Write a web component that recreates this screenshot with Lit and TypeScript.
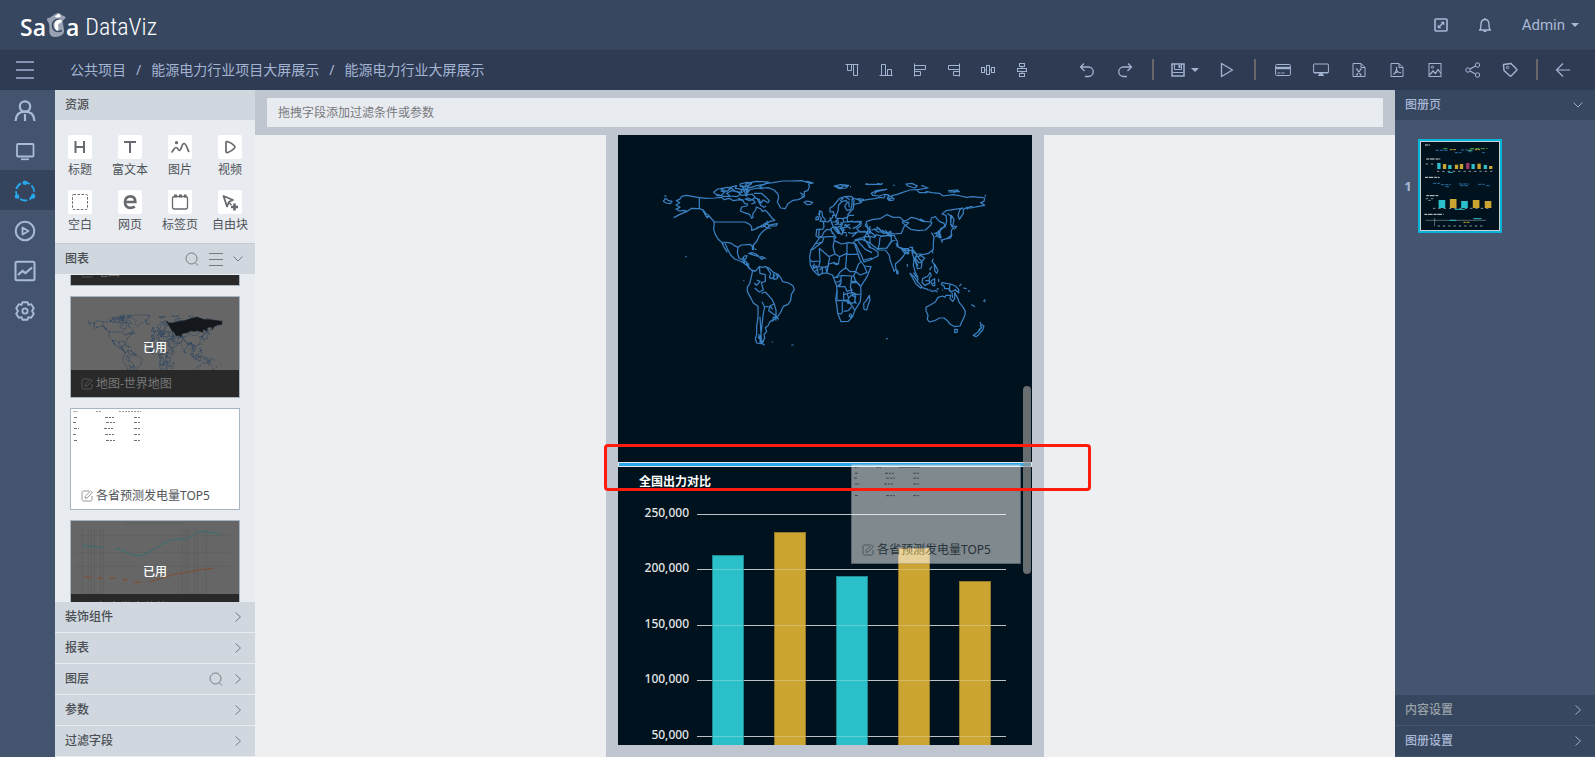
import { LitElement, html, svg, css } from "lit";
import { customElement } from "lit/decorators.js";
import { classMap } from "lit/directives/class-map.js";

/* ---------- icons ---------- */

type Glyph = { box: number; body: unknown };

const glyphs: Record<string, Glyph> = {
  // top bar
  expand: { box: 14, body: svg`<rect x="1" y="1" width="12" height="12" rx="1" stroke-width="1.600"/><path d="M4.500 9.500l5-5" stroke-width="1.500"/><path d="M6.500 3.700h3.800v3.800zM3.700 6.500v3.800h3.800z" fill="currentColor" stroke="none"/>` },
  bell: { box: 16, body: svg`<path d="M2 13h12M3 13c1-1.500 1-3 1-5.500C4 4.500 5.500 2.500 8 2.500s4 2 4 5c0 2.500 0 4 1 5.500" stroke-width="1.4"/><path d="M8 2.500V1.200M6.500 14.300h3" stroke-width="1.5"/>` },
  menu: { box: 18, body: svg`<path d="M0 1h18M0 9h18M0 17h18" stroke-width="1.5"/>` },
  // alignment tools
  alignTop: { box: 14, body: svg`<path d="M0.500 1.500h13M2.500 1.500v6h4v-6M8.500 1.500v11h4v-11"/>` },
  alignBottom: { box: 14, body: svg`<path d="M0.500 12.500h13M2.500 12.500v-11h4v11M8.500 12.500v-6h4v6"/>` },
  alignLeft: { box: 14, body: svg`<path d="M1.500 0.500v13M1.500 2.500h11v4h-11M1.500 8.500h6v4h-6"/>` },
  alignRight: { box: 14, body: svg`<path d="M12.500 0.500v13M12.500 2.500h-11v4h11M12.500 8.500h-6v4h6"/>` },
  spreadH: { box: 14, body: svg`<rect x="5.500" y="2.500" width="3" height="9"/><rect x="0.500" y="4.500" width="3" height="5"/><rect x="10.500" y="4.500" width="3" height="5"/><path d="M3.500 7h2M8.500 7h2"/>` },
  spreadV: { box: 14, body: svg`<rect x="2.500" y="5.500" width="9" height="3"/><rect x="4.500" y="0.500" width="5" height="3"/><rect x="4.500" y="10.500" width="5" height="3"/><path d="M7 3.500v2M7 8.500v2"/>` },
  // main tools
  undo: { box: 16, body: svg`<path d="M5 1.500L1.500 5l4 4M1.500 5h8a4.600 4.600 0 0 1 0 9.500H6" stroke-width="1.3"/>` },
  redo: { box: 16, body: svg`<path d="M11 1.500L14.500 5l-4 4M14.500 5h-8a4.600 4.600 0 0 0 0 9.500H10" stroke-width="1.3"/>` },
  save: { box: 14, body: svg`<path d="M1 1h12v12H1z" stroke-width="1.5"/><path d="M3.500 1.500v5h7v-5M2 9.500h10"/><path d="M7.500 2h2v3h-2z" fill="currentColor" stroke="none"/>` },
  play: { box: 16, body: svg`<path d="M2.500 1.500v13L13.500 8z" stroke-width="1.300" stroke-linejoin="round"/>` },
  card: { box: 16, body: svg`<rect x="0.600" y="2.500" width="14.800" height="11" rx="1"/><path d="M1 6h14" stroke-width="2.400"/><path d="M2.500 11h7" stroke-dasharray="3 1"/>` },
  screen: { box: 16, body: svg`<rect x="0.600" y="2" width="14.800" height="9" rx="0.500"/><path d="M1 10.500h14"/><path d="M6.500 11.500h3v2h-3z" fill="currentColor"/><path d="M5 13.500h6"/>` },
  excel: { box: 16, body: svg`<path d="M2 1.500h8l4 4v9H2zM10 1.500v4h4"/><path d="M5.500 7l4.500 6M10 7l-4.500 6M4.800 7h2M8.800 7h2M4.800 13h2M8.800 13h2" stroke-width="1.200"/>` },
  pdf: { box: 16, body: svg`<path d="M2 1.500h8l4 4v9H2zM10 1.500v4h4"/><path d="M7.500 5c.5 3 0 5-3 7.500M7.500 8c1 2 2 3 4.500 2.500M5.500 11l4-1.200" stroke-width="1.200"/>` },
  image: { box: 16, body: svg`<rect x="2" y="1.500" width="12" height="13"/><path d="M2.500 13l3.500-4 2.500 2.500 2.500-4 3 4" stroke-width="1.200"/><circle cx="5.500" cy="5.200" r="1.100"/>` },
  share: { box: 16, body: svg`<circle cx="3" cy="8" r="2.200"/><circle cx="12.500" cy="3" r="2.200"/><circle cx="12.500" cy="13" r="2.200"/><path d="M5 7l5.500-3M5 9l5.500 3" stroke-width="1.200"/>` },
  tag: { box: 16, body: svg`<path d="M1.500 2.500l7.500-1 5.500 5.500c.6.600.6 1 0 1.600L9.300 13.800c-.6.600-1 .6-1.600 0L2 8.500z" stroke-width="1.400" stroke-linejoin="round"/><circle cx="5.500" cy="5.500" r="1.200"/>` },
  back: { box: 16, body: svg`<path d="M1.500 8h13.500M8 1.500L1.500 8 8 14.500" stroke-width="1.200"/>` },
  // left rail
  user: { box: 22, body: svg`<circle cx="11" cy="6.500" r="5.200" stroke-width="2.200"/><path d="M1.500 21c.3-6 4-9.300 9.500-9.300s9.200 3.300 9.500 9.300M11 14v7" stroke-width="2.200"/>` },
  monitor: { box: 22, body: svg`<rect x="3" y="4" width="16.500" height="12.500" rx="1" stroke-width="1.800"/><path d="M7 19.300h8" stroke-width="1.700"/>` },
  ring: { box: 22, body: svg`<circle cx="11" cy="11.500" r="9" stroke-width="1.800" stroke-dasharray="7.500 2.200 7.500 1.650" stroke-dashoffset="-2"/><g fill="currentColor" stroke="none"><circle cx="11" cy="2.700" r="2.300"/><circle cx="3" cy="16.500" r="2.300"/><circle cx="19" cy="16.500" r="2.300"/></g>` },
  playCircle: { box: 22, body: svg`<circle cx="11" cy="11" r="9.300" stroke-width="2"/><path d="M8.500 7.500v7l6-3.500z" stroke-width="1.800" stroke-linejoin="round"/>` },
  trend: { box: 22, body: svg`<rect x="1.500" y="1.800" width="19" height="18.500" rx="1.500" stroke-width="2"/><path d="M4 15l4.500-4 3 2.200L18 7.500" stroke-width="2.200"/>` },
  gear: { box: 22, body: svg`<path d="M8.500 2.200h5l.9 2.700 2.800-.7 2.600 4-1.800 2.800 1.800 2.800-2.600 4-2.800-.7-.9 2.700h-5l-.9-2.700-2.800.7-2.600-4L4 11 2.200 8.200l2.600-4 2.800.7z" stroke-width="1.900" stroke-linejoin="round"/><circle cx="11" cy="11" r="2.600" stroke-width="1.800"/>` },
  // resource tiles
  heading: { box: 24, body: svg`<path d="M7.500 6v12M16 6v12M7.500 12H16" stroke-width="2"/>` },
  richText: { box: 24, body: svg`<path d="M6 7h12M12 7v11" stroke-width="2"/>` },
  picture: { box: 24, body: svg`<path d="M3.500 17.500c2-2 2.500-5 4.500-5s2 3 3.500 3c2 0 2-7 4.500-7 2.300 0 3 5 5 8.500" stroke-width="1.700"/><circle cx="8.500" cy="7.700" r="1.600" fill="currentColor" stroke="none"/>` },
  video: { box: 24, body: svg`<path d="M8 7.500c0-1 1-1 2-.7 3 1 5 2.500 6.500 4.200.6.700.6 1.200 0 2-1.500 1.700-3.500 3.500-6.500 4.500-1 .3-2 .1-2-.8z" stroke-width="1.700"/>` },
  blank: { box: 24, body: svg`<rect x="4.500" y="4.500" width="15" height="15" rx="1" stroke-dasharray="2.500 1.500"/>` },
  web: { box: 24, body: svg`<path d="M8 12h9.300c0-3.700-2-5.700-5-5.700-3.200 0-5.300 2.400-5.300 6 0 3.500 2.200 5.500 5.300 5.500 1.700 0 3.200-.4 4.500-1.200" stroke-width="2.700"/>` },
  tabs: { box: 24, body: svg`<rect x="4.500" y="6.500" width="15" height="12.500" rx="2" stroke-width="1.300"/><path d="M6 6h3M11 6h3M16 6h2.500" stroke-width="2.800"/>` },
  freeBlock: { box: 24, body: svg`<path d="M5.500 6l9.500 4-4 1.800-2 4.700z" stroke-width="1.800" stroke-linejoin="round"/><path d="M11 12.500l2.500 2.500" stroke-width="1.500"/><path d="M16.500 13.500v7M13 17h7" stroke-width="2.600"/>` },
  // section headers
  search: { box: 14, body: svg`<circle cx="6.500" cy="6.500" r="5.500"/><path d="M10.500 11l2.500 2.500"/>` },
  list: { box: 14, body: svg`<path d="M0 1.500h14M0 7.500h14M0 13.500h14"/>` },
  down: { box: 10, body: svg`<path d="M0.500 2.500l4.500 4.500 4.500-4.500"/>` },
  right: { box: 10, body: svg`<path d="M2.500 0.500l5 4.500-5 4.500"/>` },
  edit: { box: 12, body: svg`<path d="M8 1H2.500C1.500 1 1 1.500 1 2.500v7c0 1 .5 1.500 1.500 1.500h7c1 0 1.500-.5 1.500-1.500V6M4 8.200l.3-2L9.500 1l1.800 1.600L6 8z"/>` },
};

function icon(name: string, size: number) {
  const g = glyphs[name];
  return html`<svg class="ic" width=${size} height=${size} viewBox="0 0 ${g.box} ${g.box}" aria-hidden="true">${g.body}</svg>`;
}

/* ---------- world map outline ---------- */

const americas = [
  // Alaska and the Aleutians
  "M190 214l6-9 8 6 12 3-5 7-13-2zM192 198h8M245 199l15-3 38 7v33l-23-1-13 9-10 4-12 5-19 10M262 244l-10-3-14 2-10-6 12-5-12-7 11-7-10-6 10-4 6-9M240 207l-11 6",
  // Canada
  "M298 203l20 2 25-1 22-2 8 7 15-4 12 7 20-3 10 4 3 7 10 2-3 6-15 3-4 12 12 5 16 5 6 12 4-3-1-10 9-12 2-9 14 6 4 7 10-3 12 14 8 10 7 6-14 3-10 8 10 6 18 0 4-7-13 2-14 3",
  "M298 236l12 4 9 12 6 3 10 12 8 9M312 243l6 15 5 5 3-7M308 240l13 24M343 276h92l14 7 6 8 0 10 17-6 12-8 14-8 6-6M470 292l20-2 12-10M488 284l10 8 14 3",
  // United States coast
  "M343 276l-2 22 5 15 8 14 10 9M414 352l10-7 26-2 7 6 0 9 4 1-1-14 11-12 4-10 7-12 8-8 13-9 5-8M365 336l20 2 9 2 9 7 11 5",
  // Mexico and Central America
  "M365 336l5 12 9 13 3 6M368 336l2 12 12 19M375 340l8 18 9 17 12 12 16 6 10 5 13 10 8 10 9 7M414 352l-2 16 5 16 9 5 7-11 8-1-3 9-9 6 8 2 7 8 1 12 7 2M430 380l4 22 14 0M440 403l8 7",
  // Caribbean
  "M446 370l10-2 12 4 8 7-12-3-16-5zM478 382l8-2 8 4-9 4zM465 356l4 3M496 385h3M256 380h4M430 452h3M515 636h4M574 645h7",
  // Arctic islands
  "M341 187l12-10 15-2-5 8 11 3-10 10-12 1zM365 176l18-4 8 4-10 8-9-2zM380 190l14-8 18 3 10 8-12 7-20-2zM390 172l20-5-4 8 16 2 4 10-18-2zM412 176l26 4 4 14-20 2M420 162l20-5 15 4-16 8-18 0zM440 160l28-6 38 2-12 7-24 4-18 6-17-4zM430 172l18 10-12 14 20-4 10 10-10 8-12-6-10 4M446 180l26-6 18 3M462 190l22 0 14 12 10 10-4 6-14-8-8 10-4-12-14-4M436 206l12 6 10-4 8 10-12 4M425 165l12 28M445 164l-6 36M452 170l-24 14M470 204l12 22 10 6 6-4M415 205l16 6M350 193l20 6 20 0",
  // Greenland and Iceland
  "M478 170l10 4 16-1 18 7 12 12 2 10-4 14 10 18 14 2 7-14 16-11 16-2 18-9 0-15 10-3 5-12-2-8 14-3-18-2-16-5-34 1-24 0-30 5-22 3z M600 188l14 8M604 196l8 6M620 153l20 6",
  "M612 217l8-4 10 2 8 2-6 6-10 1z",
  // South America
  "M458 420l8 4 12-14 8 2 10-2 12 5 12 12 14 6 8 10 6 12 18 4 13 8 4 12-9 14-2 18-8 12-14 6-8 18-10 14-10 8-12 6-6 12-8 6 4 12-8 8 2 12-6 10-6-2 6 7-6 1-12-2-4-12 4-14 0-26 4-24 0-34-14-10-8-16-10-18 0-14 7-10 6-24z",
  "M478 410l2 20 16 4 0 20-12 4 6 22-12 6-14-12M462 460l8 6 10-12-10-4M500 412l12 18-4 12 8 4 10-12M520 430l2 18 10-2 4-12M530 432l2 12M484 490l12-4 20 22 6 14-12 6-4 14 20 14 2 16M522 520l6 20 0 18 8 10M486 515l8 16-4 20-4 34-4 34 2 14 8 2M494 531l12-2M510 528l8 10M518 575l2-14 14 4M480 560l4 70M474 620l14 20M476 612l8 26 10 8M478 634l14 10",
];

const africa = [
  "M105 232L90 252 78 270 74 290 76 315 85 332 100 346 112 340 125 339 143 345 148 360 155 378 156 392 152 418 156 440 158 460 168 485 190 484 203 470 210 450 226 424 228 400 227 380 246 350 258 320 238 318 225 300 216 272 208 250 190 248 170 252 148 242 147 230 130 230z",
  "M90 252l22-6 4-12M112 246l-28 22-8 2M103 265l2 38-22 2-7-5M103 265l29 25 18-8 14 8 22-10 0-30M148 242l-4 18 6 22M186 283h32M185 283l-3 40-16 12-8 12-6 6M164 290l-4 22-14-4-14 4-6 8-14 2-8 8M146 308l6 6 10-2M182 323l14 12 16 0 8-22 8-8M212 335l14 10 20-8-8-18M212 335l-6 12 6 16 14 14",
  "M134 292l-4 20M105 303l-4 18 12 0M96 318l4 26M88 310l-4 16M80 318h16M112 322v18M122 320l4 20M130 314l-4 24M84 326l12-6M90 334l8-6",
  "M158 348l10 0 0 22-12 10M168 346l32 2 8 0M168 370l-6 10 18 0 6 14 12-4 4 14 10 0M200 348l-2 20-2 14 6 10M198 368l18 0 10 10M146 352l14 0M150 366l12 0 6-8",
  "M156 392l0 28 20 2 0-26M176 404l12-4 16-2 12 6 10-2M154 422l16 0 14-2 6 12M172 426l0 32-4 4-8-2M176 424l10-2 16 16-12 14-14 2M188 418l10-12 14 4-4 18-10 2zM210 404l0 20 4 8M196 462l-4 6 5 4 5-5zM204 440l4 10M186 400l6 18M214 364l-14 0",
  // Madagascar
  "M253 406l2 14-6 16-4 14-8-2-1-18 8-8z",
];

const oldWorld = [
  // British Isles and western Europe
  "M-12 262l6-2 2 8-8 2zM0 242l6 4 2 14 8 8-2 6-14 0 4-8-6-8zM-6 254l4-4 0-8",
  "M10 274l14 2 6-6 8-8 0-6 8 0 2 8 20 2 12-4 8-6 14 0M10 274l2 16-4 8-18 0-2 20 8 4 10-4 6-12 10-8 10 2 10 14 6 8-4 4M-2 296l-2 22M30 262l4 14 14 0 6-12M34 276l6 14 12 2 10-4 8-12 18 0 10-4M52 264l4 16M68 264l4 14M82 258l0 16 18 2 12-2 10 6-12 10-12 6M40 290l-8 6 6 16M38 290l16 20 4 0-14-20M50 292l10 18 6 4 2-10-8-12M60 288l10 6 0 14 10 0M70 294l14-4 8 6M74 282l10 8M46 272l8 10 14 2M62 276l6 10M44 284l10-2M58 296l14 0M64 302l12-2M50 296l8 6M72 288l18-4M80 312l-2 8",
  // Scandinavia
  "M30 246l0-12 10-6 10-12 8-10 16-6 16-1 8 2-2 10 0 14-4 14-12 2-6-12 8-12-4-6-12 4-10 10-2 18-6 16-6-6-2-8zM76 200l14 10M60 214l10-10M96 204l6 8-2 24-10 10-8 10M86 214l2 18",
  // Russia north coast
  "M98 204l14 4 14 6 4-6-16-2M112 206l12 12-16 4-8 2M126 212l20-4 18-2 16-4 12 2 4-10 8 0 4 14 8-4 0-8 14-2 16-6 24-8 28-2 26-4-20-8M196 192l-18 6-20-2-4-6 14-8 32-4-28 6-10 8M206 196l-4 10 6 6 14-2M204 194l20 14M258 162l18-2 16 8-8 6-20-6zM290 180l8 8 22 0-2-4 18 4 22 2 12 8 30-4 22 4 18 4 18-2 18 2 8 0 10 2-2 10-10 4 12 8-22 4-20 4-10-2-12 6 0 12-12 18-4-12 6-18 8-4-24 4-26 4-12 10 12 4 2 16-2 12-16 16-14 10",
  "M384 182l30-2-12 8M386 186l30-2 4 2M136 163h50M138 160l10 5M172 160l12 3 4-3M42 168l20-4 24 2-8 8-20 2zM50 168l12 6 10-8 8 4M90 170h3M220 166h4M496 194v6M440 238l10-8 8 0",
  // central Asia
  "M100 276l24-2-2 14-12 8 10 10 16 0 14 4 0-12-14-10 4-14 20-6 20-2 20-12 20 8 20 0 14 14 12 2-14 12-8 20-24 2-12-6-18 4-14-14-12 2-10 2",
  "M246 276l16-6 12-8 16 4 18 8 24 2 2-12 12-4 12 14 14 6 4 10-14 6-4 16-12 8M246 276l10 10 16 12 24 4 20-2 16-14 4-10M300 266l14 8M334 308l8 12-2 20 0 18-14 12-18 4-10 4-12 2",
  "M344 310l12-2 4 16-6-4-4-8zM356 300l8 24M366 338l0-8 14-4 14-10 0-14 10-14 6 2-8 8M382 326l10-2 4-12M362 328l6 8M394 256l8 12-4 22-6-6zM382 250l10 8 0 20 4 14M338 362l0 8",
  // south and south-east Asia
  "M140 280l4 20-6 14-4 6 16 0 14 2 4-8 16 4 18-2 20 0 4 8 6 10 2 16 12 8 20 4 14-2 6 8 6 8M186 300l20 14 12-4M150 288l-2 14 20 18M162 296l12 10 18 0M170 290l14 12M196 300l8 12 10-10M180 322l-2 20-4 14 26-2 14-18 0-16-10-4-24 4M200 356l12-20 16-8M228 340l4 10 18 6 16 0 0 14-12 0-10-14M150 340l26 20 20 0 12 16 2 14 10 26 2 8 6-6-2-16 14-12 10-12 8-12M230 420l4 4 0 8-4-2zM262 402v8M252 360l12 12 0-16M268 352l10 0-2 16 6 18-2 20 6 22 8 14M276 352l4 16 10 4 14 0-10 10 12 14-2 18-12 2-4-16-4-12M290 372l-4 12 10 14 10 0M282 382l12 26M300 376l14 8-8 10",
  // Arabia and the Levant
  "M96 320l16-14 22-2 8 6 8 12 0 18-10-6-14-6-20 4-8 8M106 340l8 16 10 20 8 20 18-6 24-12 0-12-14-10-12-4-8-18-14-6M130 320l8 14 14 18M114 334l22 24 20 10M132 390l24-6M84 308l14 2 14-4M140 304l10 2M104 330l18-6 14-2",
  // Indonesia, Philippines, New Guinea
  "M198 626h5M270 430l12 10 10 14 14 16-4 4-14-12-10-18zM280 428l14 18-2 12M304 472l20 6M308 446l16-8 6-10 4 8-6 8 0 16-14 6-8-10zM334 452l10-6 0 22-6-2-6-10zM346 458l-8 2M316 452l10 0M328 420l8-10M340 386l-4 8 6 8 2 10M344 402l10 20-4 8-6-8zM322 480h12M332 484l16-2 4 4M350 478l6-2M356 446v10M366 458l12 2 14 2 14 6 10 10 0 8-12-6-10 6-8-10-12 0-2-8-8-4zM390 462l-2 22M418 468l6-6M430 474l10 2M444 484l6-2M366 480l3 0M404 478l14 12",
  // Australia and New Zealand
  "M318 532l14-8 14-8 8-14 14-4 6 4 4-6 14 0-2 10 8 8 6-8 0-18 8 14 6 16 10 12 8 14-2 14-10 20-4 10-16 2-14-8-8-10-10-8-14 0-14 8-16 4-6-8 2-12-6-14z M396 488l2 16M404 598l8 0 0 8-8 2z",
  "M480 576l4 8 8 4-4 12-12 14-8 6-8-4 14-10 4-8 6-6-4-8M486 590l-10 14M454 524l8 4 2 4M490 514l6-6M492 510l4 6",
];

const russia =
  "M95 196l20 20 30-4 40-10 50-8 50-16 34-8 50 18 60 2 68 10-2 20-30 4-28 14-8 20-8-20-30 6-4 26-20-14-10 10 4 12-20-6-24-8-20 8-30-4-24 14-30 4-14 24-10-14-20 10-14-26-16-10z";

function worldMap(fillRussia: boolean) {
  return svg`
    ${americas.map((d) => svg`<path d=${d} />`)}
    <g transform="translate(555 90)">${africa.map((d) => svg`<path d=${d} />`)}</g>
    <g transform="translate(660 0)">
      ${oldWorld.map((d) => svg`<path d=${d} />`)}
      ${fillRussia ? svg`<path class="solid" d=${russia} />` : ""}
    </g>`;
}

/* ---------- data ---------- */

const resources = [
  ["heading", "标题"], ["richText", "富文本"], ["picture", "图片"], ["video", "视频"],
  ["blank", "空白"], ["web", "网页"], ["tabs", "标签页"], ["freeBlock", "自由块"],
];

const rail = [
  ["user", "用户"], ["monitor", "大屏"], ["ring", "设计"],
  ["playCircle", "播放"], ["trend", "分析"], ["gear", "设置"],
];

const ticks = ["250,000", "200,000", "150,000", "100,000", "50,000"];
const TICK_TOP = 47;
const TICK_STEP = 55.5;

const bars = [
  { x: 94, top: 88, tone: "teal" },
  { x: 156, top: 65, tone: "gold" },
  { x: 218, top: 109, tone: "teal" },
  { x: 280, top: 81, tone: "gold" },
  { x: 341, top: 114, tone: "gold" },
];

@customElement("app-root")
export class AppRoot extends LitElement {
  static styles = css`
    :host {
      display: grid;
      grid-template-rows: 51px 39px minmax(0, 1fr);
      height: 100vh;
      overflow: hidden;
      font-family: "Noto Sans", "Noto Sans CJK SC", sans-serif;
      font-size: 12px;
      line-height: 18px;
      color: #4f5358;
    }
    * { box-sizing: border-box; }
    button { font: inherit; color: inherit; background: none; border: 0; padding: 0; margin: 0; display: flex; align-items: center; justify-content: center; }
    a { color: inherit; text-decoration: none; }
    h2, p, ol, ul { margin: 0; padding: 0; font: inherit; list-style: none; }
    .ic { display: block; flex: none; fill: none; stroke: currentColor; stroke-width: 1; }
    .caret { width: 0; height: 0; border: 4px solid transparent; border-top-color: currentColor; border-bottom: 0; }

    .top { display: flex; align-items: center; justify-content: space-between; padding: 0 16px 0 20px; background: #37475f; border-bottom: 1px solid #2c384c; color: #a9b8d6; }
    .brand { display: flex; align-items: center; padding-top: 3px; color: #fff; font-family: "Liberation Sans Narrow", "Roboto Condensed", "Noto Sans", sans-serif; font-size: 24px; line-height: 30px; }
    .brand b { font-family: "Open Sans", sans-serif; font-size: 23px; font-weight: 600; }
    .emblem { display: block; margin-bottom: 3px; }
    .brand .thin { padding-left: 6px; font-weight: 300; }
    .account { display: flex; align-items: center; }
    .account .slot { width: 44px; height: 30px; }
    .account .name { gap: 6px; padding-left: 15px; font-family: Roboto, sans-serif; font-size: 15px; }

    .bar { display: flex; align-items: center; padding: 0 15px 2px 16px; background: #2f3b52; color: #a3b3d2; }
    .crumbs { display: flex; flex: 1; margin-left: 36px; font-size: 14px; line-height: 20px; }
    .crumbs li + li::before { content: "/"; padding: 0 10px; }
    .tools { display: flex; align-items: center; }
    .align { margin-right: 29px; }
    .t34 { width: 34px; height: 36px; }
    .t36 { width: 36px; height: 36px; }
    .t38 { width: 38px; height: 36px; }
    .t46 { width: 46px; height: 36px; gap: 6px; }
    .rule { width: 18px; height: 21px; display: flex; justify-content: center; }
    .rule::before { content: ""; width: 2px; background: #68676a; }

    .work { display: grid; grid-template-columns: 55px 200px minmax(0, 1fr) 200px; grid-template-rows: minmax(0, 1fr); min-height: 0; }

    .rail { background: #45546e; color: #a9bcd6; }
    .rail button { width: 100%; height: 40px; padding: 2px 5px 0 0; }
    .rail .on { background: #35445c; color: #28a7ea; }

    .panel { display: flex; flex-direction: column; min-height: 0; background: #e8ebf0; }
    .head { display: flex; align-items: center; flex: none; height: 30px; padding: 0 10px; background: #d0d7df; font-weight: 500; color: #4b4f54; }
    .head h2 { flex: 1; font-weight: 500; }
    .head .acts { display: flex; align-items: center; gap: 10px; padding-right: 2px; color: #777b80; }
    .charts { border-top: 1px solid #c3cad2; height: 31px; }
    .fold { height: 31px; border-bottom: 1px solid #e8ebf0; }
    .tiles { display: grid; grid-template-columns: repeat(4, 1fr); align-content: start; flex: none; padding-top: 15px; row-gap: 10px; height: 123px; }
    .tiles button { width: 100%; flex-direction: column; gap: 1px; line-height: 20px; }
    .tile { width: 24px; height: 24px; background: #fff; border-radius: 2px; color: #66696d; }

    .cards { flex: 1; min-height: 0; overflow: hidden; border-top: 1px solid #e8ebf0; }
    .stack { display: flex; flex-direction: column; gap: 10px; margin: -91px 15px 0; }
    .chart { position: relative; display: flex; flex-direction: column; flex: none; height: 102px; background: #fff; border: 1px solid #aab5c3; }
    .chart .pic { display: block; flex: 1; min-height: 0; width: 100%; }
    .chart .foot { display: flex; align-items: center; gap: 3px; height: 27px; padding: 0 10px; white-space: nowrap; }
    .chart .foot .ic { color: #999; }
    .used { background: #666; }
    .used .foot { background: #292929; color: #777; }
    .used .foot .ic { color: #555; }
    .flag { position: absolute; inset: 0; display: flex; align-items: center; justify-content: center; padding-top: 2px; color: #fff; font-weight: 500; }

    .map path { fill: none; stroke: #3a81c4; stroke-width: 3.700; stroke-linejoin: round; }
    .mini path { fill: none; stroke: #23405e; stroke-width: 5; stroke-dasharray: 14 8; }
    .mini .solid { fill: #14171c; stroke: #14171c; stroke-dasharray: none; }

    .center { display: flex; flex-direction: column; align-items: center; min-width: 0; background: #eeeff1; }
    .filter { align-self: stretch; flex: none; display: flex; height: 45px; padding: 8px 12px; background: #bfc6d0; }
    .filter input { flex: 1; min-width: 0; border: 0; padding: 0 11px; background: #e8ebf0; font: inherit; border-radius: 0; outline: 0; }
    .filter input::placeholder { color: #77797c; opacity: 1; }
    .frame { position: relative; flex: 1; min-height: 0; display: flex; padding: 0 12px 12px; background: #bfc6d0; }
    .board { width: 414px; overflow: hidden; background: #00121d; }
    .board svg { display: block; }
    .drop { height: 5px; background: #28a7ea; border: 1px solid #dfe6ec; }
    .thumb { position: absolute; right: 13px; top: 251px; width: 8px; height: 188px; border-radius: 4px; background: rgba(148, 148, 148, 0.7); }
    .ghost { position: absolute; left: 245px; top: 329px; width: 170px; opacity: 0.5; }
    .ghost .chart { height: 100px; }
    .mark { position: absolute; left: -2px; top: 309px; width: 487px; height: 47px; border: 3px solid #ff1c0e; border-radius: 4px; }

    .axis { fill: #e4e6e8; font-size: 12px; font-weight: 500; text-anchor: end; }
    .title { fill: #fff; font-size: 12px; font-weight: 700; }
    .grid { stroke: #a8adb2; }
    .teal { fill: #2bc0c9; stroke: #1d8a92; }
    .gold { fill: #cba432; stroke: #93782a; }
    .veil { stroke: #fff; stroke-opacity: 0.250; }

    .side { display: flex; flex-direction: column; min-height: 0; background: #45556f; color: #a9b8d6; }
    .side .head { background: #37475f; color: #a9b8d6; }
    .side .head .acts { color: #9cabc6; }
    .side .fold { border-bottom-color: #45556f; }
    .side .muted { color: #9aa2a8; }
    .pages { flex: 1; min-height: 0; padding: 19px 9px; }
    .page { display: flex; align-items: center; gap: 6px; }
    .page b { width: 8px; font-size: 13px; text-align: center; }
    .shot { display: block; width: 84px; height: 94px; padding: 0; border: 2px solid #06b2d6; }
    .shot svg { display: block; width: 100%; height: 100%; background: #00121d; border: 1px solid #c9d2da; }
  `;

  private tool(name: string, label: string, cls: string, size = 16) {
    return html`<button class=${cls} title=${label} aria-label=${label}>${icon(name, size)}</button>`;
  }

  private tablePic() {
    const rows = [2, 8, 13, 19, 25, 31];
    return html`<svg class="pic" viewBox="0 0 168 73" preserveAspectRatio="xMinYMin" fill="none" stroke="#333" aria-hidden="true">
      ${rows.map((y, i) => i === 0
        ? svg`<path d="M2.500 2.500h4M25 2.500h6M48 2.500h22" stroke-dasharray="2 1" stroke-opacity=".5"/>`
        : svg`<path d=${`M${2 + (i % 2)} ${y + 0.5}h${5 - (i % 3)}M${33 + (i % 3)} ${y + 0.5}h9M63 ${y + 0.5}h6`} stroke-dasharray="3 1 2 1" stroke-opacity=".7"/>`)}
    </svg>`;
  }

  private chartCard(label: string, used: boolean, pic: unknown) {
    return html`<div class=${classMap({ chart: true, used })}>
      ${pic}
      <div class="foot">${icon("edit", 12)}<span>${label}</span></div>
      ${used ? html`<span class="flag">已用</span>` : ""}
    </div>`;
  }

  private fold(label: string, search = false, muted = false) {
    return html`<div class=${classMap({ head: true, fold: true, muted })}>
      <h2>${label}</h2>
      <div class="acts">
        ${search ? html`<button aria-label="搜索">${icon("search", 14)}</button>` : ""}
        <button aria-label="展开">${icon("right", 10)}</button>
      </div>
    </div>`;
  }

  private pageShot() {
    const upper = [[732, 489, "t"], [749, 492, "g"], [765, 495, "t"], [785, 494, "g"], [800, 492, "g"], [819, 489, "p"], [835, 492, "t"], [853, 491, "g"], [872, 495, "t"], [888, 498, "g"]];
    const lower = [[741, 600, "t"], [775, 597, "g"], [809, 603, "t"], [844, 600, "g"], [880, 603, "g"]];
    const tone: Record<string, string> = { t: "#2bc0c9", g: "#cba432", p: "#9c3a6c" };
    return html`<svg viewBox="678 426 235 264" preserveAspectRatio="none" fill="none" stroke-width="3" aria-hidden="true">
      <g stroke="#d8dde0"><path d="M690 435h15M694 477h42M690 532h44M694 587h36M688 643h58" stroke-dasharray="9 2 14 3"/>
      <path d="M692 492h26M692 596h26M700 601h8M726 514h168M714 625h174M728 678h140" stroke-dasharray="7 9" stroke-opacity=".65"/>
      <path d="M692 661h182M719 654v24" stroke-opacity=".4"/></g>
      <path d="M722 451h38M780 458h20M798 450h40M820 455h14M862 458h8M714 550h22M738 554h30M752 560h10M792 552h30M796 557h26M850 553h20M874 557h14" stroke="#2c6fa8" stroke-dasharray="10 3"/>
      <path d="M745 446h12M826 446h52M820 451h16" stroke="#4aa843" stroke-dasharray="12 4"/>
      <path d="M765 449h18M840 449h16M806 667h20" stroke="#cba432" stroke-dasharray="8 2"/>
      <path d="M760 517h14M780 628h30M764 661h20M836 656h24" stroke="#2bc0c9"/>
      ${upper.map(([x, y, c]) => svg`<rect x=${Number(x) - 5} y=${y} width="10" height=${507 - Number(y)} fill=${tone[c]} />`)}
      ${lower.map(([x, y, c]) => svg`<rect x=${Number(x) - 10} y=${y} width="20" height=${624 - Number(y)} fill=${tone[c]} />`)}
    </svg>`;
  }

  render() {
    return html`
      <header class="top">
        <div class="brand">
          <b>Sa</b>
          <svg class="emblem" width="20" height="26" viewBox="0 0 20 26" aria-hidden="true">
            <path d="M1 6.500c2-.5 4-1.500 6-3C9 2 12 0 14 1.500c1 .8 1 1.500 2.500 2 2 .5 3 1 3 2.500l-3 3 1.500 9c.3 3-1 5-4 6-3.500 1.200-8 1.500-9.500-1C2.500 20 4 16 3 12 2.500 10 .5 8.500 1 6.500z" fill="#99a3b3"/>
            <path d="M16 8.500C12 5.500 6.500 8 6.500 13.500c0 5 4.500 7.500 9.500 5" fill="none" stroke="#37475f" stroke-width="1.500"/>
            <path d="M8.500 4.500l4.500-3 2 3-3.500 1.200zM16 8c-3.500-1.500-7.500.5-7.500 5.500 0 3 1.500 5 3.500 5.500l.5-3.500c-1-2.500 0-4.500 2.500-4.500z" fill="#fff"/>
          </svg>
          <b>a</b><span class="thin">DataViz</span>
        </div>
        <div class="account">
          <button class="slot" aria-label="全屏">${icon("expand", 14)}</button>
          <button class="slot" aria-label="通知">${icon("bell", 16)}</button>
          <button class="name">Admin<span class="caret"></span></button>
        </div>
      </header>

      <div class="bar">
        <button aria-label="菜单">${icon("menu", 18)}</button>
        <nav class="crumbs"><ol class="tools">
          <li><a href="#">公共项目</a></li>
          <li><a href="#">能源电力行业项目大屏展示</a></li>
          <li><a href="#">能源电力行业大屏展示</a></li>
        </ol></nav>
        <div class="tools align">
          ${this.tool("alignTop", "顶对齐", "t34", 14)}${this.tool("alignBottom", "底对齐", "t34", 14)}
          ${this.tool("alignLeft", "左对齐", "t34", 14)}${this.tool("alignRight", "右对齐", "t34", 14)}
          ${this.tool("spreadH", "水平分布", "t34", 14)}${this.tool("spreadV", "垂直分布", "t34", 14)}
        </div>
        <div class="tools">
          ${this.tool("undo", "撤销", "t38")}${this.tool("redo", "重做", "t38")}
          <span class="rule"></span>
          <button class="t46" title="保存" aria-label="保存">${icon("save", 14)}<span class="caret"></span></button>
          ${this.tool("play", "预览", "t38")}
          <span class="rule"></span>
          ${this.tool("card", "卡片", "t38")}${this.tool("screen", "屏幕", "t38")}
          ${this.tool("excel", "导出Excel", "t38")}${this.tool("pdf", "导出PDF", "t38")}
          ${this.tool("image", "导出图片", "t38")}${this.tool("share", "分享", "t38")}${this.tool("tag", "标签", "t36")}
          <span class="rule"></span>
          ${this.tool("back", "返回", "t34")}
        </div>
      </div>

      <div class="work">
        <nav class="rail">
          ${rail.map(
            ([n, label]) => html`<button class=${classMap({ on: n === "ring" })} aria-label=${label}>${icon(n, 22)}</button>`
          )}
        </nav>

        <aside class="panel">
          <div class="head"><h2>资源</h2></div>
          <div class="tiles">
            ${resources.map(([n, label]) => html`<button><span class="tile">${icon(n, 24)}</span>${label}</button>`)}
          </div>
          <div class="head charts">
            <h2>图表</h2>
            <div class="acts">
              <button aria-label="搜索">${icon("search", 14)}</button>
              <button aria-label="列表">${icon("list", 14)}</button>
              <button aria-label="收起">${icon("down", 10)}</button>
            </div>
          </div>
          <div class="cards"><div class="stack">
            ${this.chartCard("地图", true, html`<svg class="pic"></svg>`)}
            ${this.chartCard("地图-世界地图", true, html`<svg class="pic mini" viewBox="68 24 1212 527" aria-hidden="true">${worldMap(true)}</svg>`)}
            ${this.chartCard("各省预测发电量TOP5", false, this.tablePic())}
            ${this.chartCard("各省发电趋势", true, html`<svg class="pic" viewBox="63 753 504 219" fill="none" stroke-width="3" aria-hidden="true">
              <path d="M78 797h462M78 848h462M78 889h462M97 776v196M115 776v196M124 776v196M133 776v196M151 776v196M160 776v196M397 776v196M406 776v196M415 776v196M433 776v196M442 776v196M469 776v196" stroke="#5f6061"/>
              <path d="M228 759h60M294 759h106" stroke="#505a5c" stroke-dasharray="5 3"/>
              <path d="M98 827l30 2 32 4M198 835l16 4 22 12 20 6h14l22-9 30-16 36-21 18-4h30l16-6 18-14 20-3 26 4 26 5" stroke="#2c7074" stroke-dasharray="12 3"/>
              <path d="M104 922h24M144 925h18M180 925h18M218 928l14 2M254 937h22M300 936l30-10 40-12 40-7 34-7 44-5" stroke="#8a4524" stroke-dasharray="14 4"/>
            </svg>`)}
          </div></div>
          ${this.fold("装饰组件")}${this.fold("报表")}${this.fold("图层", true)}${this.fold("参数")}${this.fold("过滤字段")}
        </aside>

        <main class="center">
          <div class="filter"><input type="text" aria-label="过滤条件" placeholder="拖拽字段添加过滤条件或参数" /></div>
          <div class="frame">
            <div class="board">
              <svg class="map" width="414" height="327" viewBox="54 15 1242 981" role="img" aria-label="世界地图">${worldMap(false)}</svg>
              <div class="drop"></div>
              <svg width="414" height="333" viewBox="0 0 414 333" role="img" aria-label="全国出力对比">
                ${ticks.map((_, i) => svg`<path class="grid" d=${`M79 ${Math.floor(TICK_TOP + i * TICK_STEP) + 0.5}h309`} />`)}
                ${bars.map((b) => svg`<rect class=${b.tone} x=${b.x + 0.5} y=${b.top + 0.5} width="31" height="300" />`)}
                ${ticks.map((t, i) => {
                  const y = Math.floor(TICK_TOP + i * TICK_STEP);
                  return svg`<path class="veil" d=${`M79 ${y + 0.5}h309`} /><text class="axis" x="71" y=${y + 3}>${t}</text>`;
                })}
                <text class="title" x="21" y="19">全国出力对比</text>
              </svg>
            </div>
            <div class="ghost">${this.chartCard("各省预测发电量TOP5", false, this.tablePic())}</div>
            <div class="thumb"></div>
            <div class="mark"></div>
          </div>
        </main>

        <aside class="side">
          <div class="head"><h2>图册页</h2><div class="acts"><button aria-label="收起">${icon("down", 10)}</button></div></div>
          <div class="pages">
            <div class="page"><b>1</b><button class="shot" aria-label="第1页">${this.pageShot()}</button></div>
          </div>
          ${this.fold("内容设置", false, true)}${this.fold("图册设置")}
        </aside>
      </div>
    `;
  }
}
